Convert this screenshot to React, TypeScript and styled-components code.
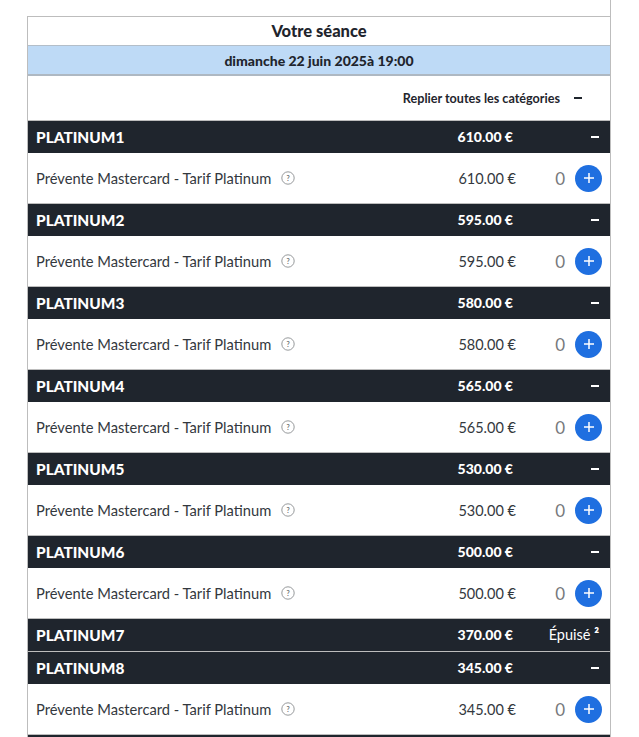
import { FC } from "react";
import styled, { createGlobalStyle } from "styled-components";

interface Category {
  name: string
  price: string
  soldOut?: boolean
}

const categories: Category[] = [
  { name: "PLATINUM1", price: "610.00 €" },
  { name: "PLATINUM2", price: "595.00 €" },
  { name: "PLATINUM3", price: "580.00 €" },
  { name: "PLATINUM4", price: "565.00 €" },
  { name: "PLATINUM5", price: "530.00 €" },
  { name: "PLATINUM6", price: "500.00 €" },
  { name: "PLATINUM7", price: "370.00 €", soldOut: true },
  { name: "PLATINUM8", price: "345.00 €" },
];

const App: FC = () => (
  <Page>
    <GlobalStyle />
    <Panel>
      <Title>Votre séance</Title>
      <DateBar>dimanche 22 juin 2025à 19:00</DateBar>
      <CollapseAll>
        <span>Replier toutes les catégories</span>
        <CollapseDash />
      </CollapseAll>
      {categories.map(category => (
        <section key={category.name}>
          <CategoryHead>
            <CategoryName>{category.name}</CategoryName>
            <CategoryPrice>{category.price}</CategoryPrice>
            {category.soldOut
              ? <SoldOut>Épuisé <b>²</b></SoldOut>
              : <HeadToggle><HeadDash /></HeadToggle>}
          </CategoryHead>
          {!category.soldOut && (
            <TicketRow>
              <TicketName>Prévente Mastercard - Tarif Platinum</TicketName>
              <HelpIcon />
              <TicketPrice>{category.price}</TicketPrice>
              <Quantity>0</Quantity>
              <AddButton type="button" aria-label="Ajouter">
                <svg width="10" height="10" viewBox="0 0 10 10">
                  <path d="M5 0v10M0 5h10" stroke="#fff" strokeWidth="1.5" />
                </svg>
              </AddButton>
            </TicketRow>
          )}
        </section>
      ))}
      <NextHead />
    </Panel>
  </Page>
);

const HelpIcon: FC = () => (
  <StyledHelp viewBox="0 0 14 14">
    <circle cx="7" cy="7" r="6.2" fill="none" stroke="#8a8d90" strokeWidth="0.9" />
    <text x="7" y="9.6" textAnchor="middle" fontSize="7" fontWeight="700" fill="#6d7073" fontFamily="Lato, sans-serif">?</text>
  </StyledHelp>
);

const GlobalStyle = createGlobalStyle`
  html, body {
    margin: 0;
    padding: 0;
    background: #fff;
  }
  body {
    font-family: Lato, "Noto Sans", sans-serif;
    color: #1f252d;
  }
`;

const Page = styled.div`
  width: 611px;
  height: 737px;
  box-sizing: border-box;
  padding: 16px 0 0 27px;
  overflow: hidden;
  border-right: 1px solid #bdbdbd;
`;

const Panel = styled.div`
  border-left: 1px solid #bdbdbd;
  height: 721px;
`;

const Title = styled.div`
  height: 29px;
  box-sizing: border-box;
  border-top: 1px solid #bdbdbd;
  display: flex;
  align-items: center;
  justify-content: center;
  font-size: 16.5px;
  font-weight: 900;
  color: #1f252d;
`;

const DateBar = styled.div`
  height: 31px;
  box-sizing: border-box;
  border-top: 1px solid #b3bec9;
  border-bottom: 2px solid #aeb8c2;
  background: #bedaf6;
  display: flex;
  align-items: center;
  justify-content: center;
  font-size: 14px;
  font-weight: 900;
`;

const CollapseAll = styled.div`
  height: 44px;
  display: flex;
  align-items: center;
  justify-content: flex-end;
  gap: 14px;
  padding-right: 28px;
  font-size: 12.6px;
  font-weight: 700;
`;

const CollapseDash = styled.i`
  width: 8px;
  height: 2px;
  background: #1f252d;
`;

const CategoryHead = styled.div`
  height: 33px;
  box-sizing: border-box;
  border-top: 1px solid #bdbdbd;
  background: #1f252d;
  color: #fff;
  display: flex;
  align-items: center;
  padding: 0 8px 1px;
`;

const CategoryName = styled.div`
  flex: 1;
  font-size: 15.4px;
  font-weight: 900;
`;

const CategoryPrice = styled.div`
  width: 80px;
  text-align: right;
  margin-right: 8px;
  font-size: 14px;
  font-weight: 900;
`;

const HeadToggle = styled.div`
  width: 81px;
  display: flex;
  justify-content: flex-end;
  padding-right: 3px;
  box-sizing: border-box;
`;

const HeadDash = styled.i`
  width: 8px;
  height: 2px;
  background: #fff;
`;

const SoldOut = styled.div`
  width: 81px;
  box-sizing: border-box;
  padding-right: 3px;
  text-align: right;
  font-size: 14.5px;

  b {
    font-weight: 900;
  }
`;

const TicketRow = styled.div`
  height: 50px;
  display: flex;
  align-items: center;
  padding: 0 8px;
`;

const TicketName = styled.div`
  font-size: 14.7px;
  color: #33383e;
`;

const StyledHelp = styled.svg`
  width: 14px;
  height: 14px;
  margin-left: 10px;
`;

const TicketPrice = styled.div`
  margin-left: auto;
  width: 80px;
  text-align: right;
  font-size: 14.5px;
  color: #33383e;
`;

const Quantity = styled.div`
  width: 49px;
  text-align: right;
  font-size: 17px;
  color: #77797c;
`;

const AddButton = styled.button`
  width: 27px;
  height: 27px;
  margin-left: 10px;
  padding: 0;
  border: none;
  border-radius: 50%;
  background: #1f6fe0;
  display: flex;
  align-items: center;
  justify-content: center;
`;

const NextHead = styled.div`
  height: 33px;
  border-top: 1px solid #bdbdbd;
  background: #1f252d;
`;

export default App;
